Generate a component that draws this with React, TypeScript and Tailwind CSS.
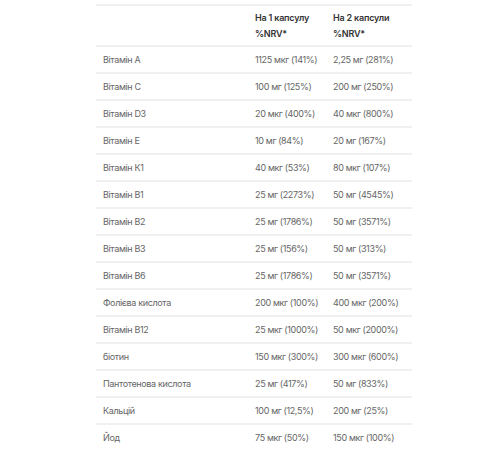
import React from "react";

const rows: [string, string, string][] = [
  ["Вітамін А", "1125 мкг (141%)", "2,25 мг (281%)"],
  ["Вітамін С", "100 мг (125%)", "200 мг (250%)"],
  ["Вітамін D3", "20 мкг (400%)", "40 мкг (800%)"],
  ["Вітамін Е", "10 мг (84%)", "20 мг (167%)"],
  ["Вітамін К1", "40 мкг (53%)", "80 мкг (107%)"],
  ["Вітамін В1", "25 мг (2273%)", "50 мг (4545%)"],
  ["Вітамін В2", "25 мг (1786%)", "50 мг (3571%)"],
  ["Вітамін В3", "25 мг (156%)", "50 мг (313%)"],
  ["Вітамін В6", "25 мг (1786%)", "50 мг (3571%)"],
  ["Фолієва кислота", "200 мкг (100%)", "400 мкг (200%)"],
  ["Вітамін В12", "25 мкг (1000%)", "50 мкг (2000%)"],
  ["біотин", "150 мкг (300%)", "300 мкг (600%)"],
  ["Пантотенова кислота", "25 мг (417%)", "50 мг (833%)"],
  ["Кальцій", "100 мг (12,5%)", "200 мг (25%)"],
  ["Йод", "75 мкг (50%)", "150 мкг (100%)"],
];

export default function App() {
  return (
    <div className="w-[500px] h-[450px] bg-white overflow-hidden" style={{ fontFamily: "Inter, 'Noto Sans', sans-serif" }}>
      <div className="pl-[96px] pt-[4px]">
        <div className="w-[316px] border-t-2 border-[#f0f0f0]">
          <div className="grid grid-cols-[152px_78px_86px] h-[41px] border-b-2 border-[#f0f0f0] items-center text-[9px] font-semibold text-[#333] leading-[16px] tracking-[-0.2px]">
            <div />
            <div className="pl-[7px]">На 1 капсулу<br />%NRV*</div>
            <div className="pl-[7px]">На 2 капсули<br />%NRV*</div>
          </div>
          {rows.map((r, i) => (
            <div key={i} className="grid grid-cols-[152px_78px_86px] h-[27px] border-b-2 border-[#f0f0f0] items-center text-[9px] text-[#666] tracking-[-0.35px]">
              <div className="pl-[7px]">{r[0]}</div>
              <div className="pl-[7px] whitespace-nowrap">{r[1]}</div>
              <div className="pl-[7px] whitespace-nowrap">{r[2]}</div>
            </div>
          ))}
        </div>
      </div>
    </div>
  );
}
